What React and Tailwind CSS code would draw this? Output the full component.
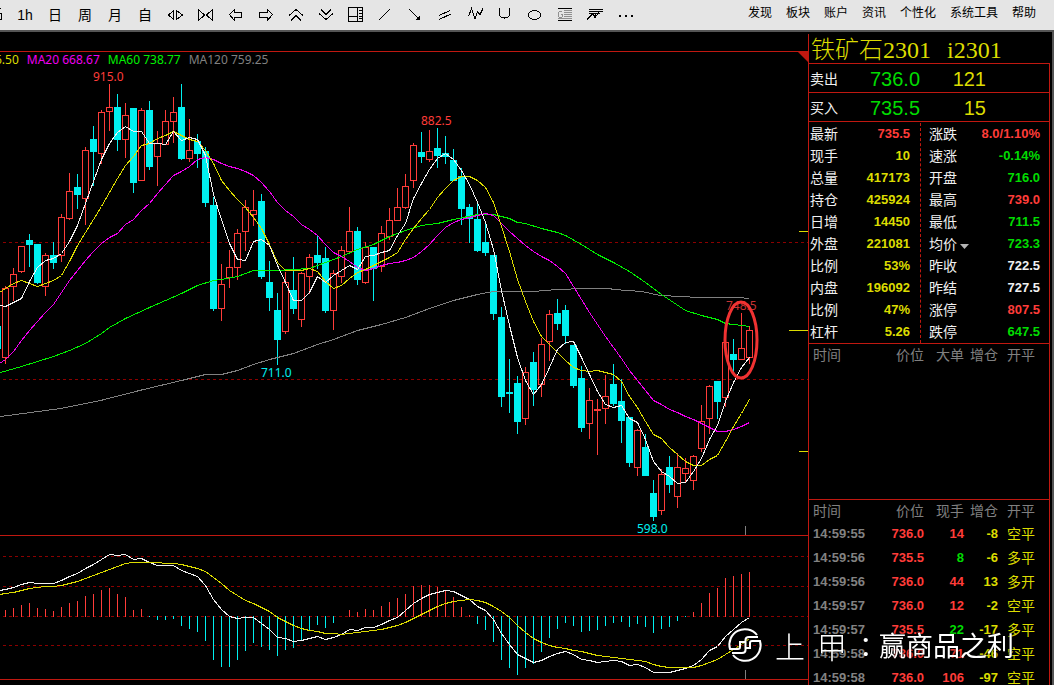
import React from "react";

// [up = 1 / down = 0, high, body top, body bottom, low], one candle every 8px
const candles = [
  [1, 286, 288, 358, 364], [1, 268, 274, 287, 301], [1, 246, 246, 272, 273],
  [0, 234, 240, 245, 267], [0, 244, 244, 283, 284], [1, 253, 255, 287, 296],
  [0, 242, 255, 263, 269], [1, 214, 217, 256, 262], [1, 173, 191, 219, 220],
  [0, 174, 187, 195, 209], [1, 147, 150, 199, 225], [0, 126, 139, 152, 186],
  [1, 110, 112, 154, 164], [1, 84, 107, 112, 131], [0, 94, 107, 140, 151],
  [1, 103, 115, 140, 158], [0, 108, 108, 183, 193], [1, 108, 110, 181, 181],
  [0, 101, 110, 167, 170], [1, 131, 143, 157, 186], [1, 110, 121, 145, 145],
  [1, 97, 112, 122, 143], [0, 84, 107, 159, 160], [1, 119, 150, 159, 162],
  [0, 134, 141, 154, 168], [0, 147, 151, 203, 207], [0, 197, 205, 309, 311],
  [1, 264, 284, 309, 321], [1, 250, 267, 278, 288], [1, 229, 233, 268, 280],
  [1, 200, 207, 232, 251], [1, 190, 210, 215, 226], [0, 194, 201, 277, 279],
  [0, 261, 282, 298, 311], [0, 293, 310, 340, 365], [1, 272, 282, 332, 334],
  [0, 257, 290, 309, 314], [1, 272, 273, 320, 327], [1, 254, 257, 277, 294],
  [0, 236, 255, 263, 269], [0, 247, 258, 311, 313], [1, 270, 273, 311, 330],
  [1, 246, 250, 277, 283], [1, 207, 231, 252, 253], [0, 227, 231, 280, 285],
  [1, 242, 247, 283, 284], [0, 247, 247, 269, 301], [1, 226, 233, 267, 272],
  [1, 208, 220, 237, 240], [1, 188, 207, 221, 221], [1, 174, 186, 208, 209],
  [1, 143, 145, 181, 188], [0, 132, 152, 157, 163], [1, 130, 151, 160, 162],
  [0, 128, 148, 156, 168], [0, 136, 153, 157, 164], [0, 149, 160, 181, 181],
  [0, 168, 176, 209, 225], [0, 204, 207, 219, 243], [0, 204, 219, 251, 252],
  [0, 223, 242, 253, 256], [0, 255, 255, 314, 320], [0, 307, 317, 397, 407],
  [0, 359, 392, 394, 413], [0, 376, 383, 422, 434], [1, 367, 372, 419, 425],
  [0, 352, 362, 390, 406], [1, 338, 344, 385, 397], [1, 310, 314, 342, 361],
  [0, 299, 313, 324, 330], [0, 305, 310, 336, 344], [0, 345, 345, 386, 388],
  [0, 366, 378, 428, 432], [1, 388, 400, 424, 439], [1, 399, 409, 411, 455],
  [1, 375, 396, 409, 424], [0, 364, 384, 404, 406], [0, 379, 401, 421, 443],
  [0, 417, 417, 463, 467], [1, 429, 430, 468, 476], [0, 434, 447, 476, 476],
  [0, 480, 493, 517, 521], [1, 469, 474, 511, 515], [0, 456, 467, 485, 493],
  [1, 453, 467, 497, 508], [1, 458, 468, 474, 483], [1, 455, 456, 481, 490],
  [1, 405, 421, 449, 452], [1, 385, 386, 419, 434], [0, 381, 381, 402, 419],
  [1, 340, 342, 398, 407], [0, 339, 354, 360, 372], [1, 313, 348, 360, 360],
  [1, 326, 330, 358, 364],
];

const ma5 = [
  306, 302, 298, 281, 267, 260, 258, 253, 241, 225, 203, 181, 159, 143, 132,
  126, 131, 131, 143, 143, 144, 131, 140, 137, 139, 155, 194, 219, 243, 259,
  260, 241, 239, 245, 265, 282, 300, 300, 292, 276, 282, 275, 270, 265, 269,
  256, 255, 252, 250, 235, 223, 198, 183, 169, 158, 153, 159, 170, 184, 202,
  222, 249, 290, 325, 357, 380, 394, 384, 367, 349, 342, 341, 357, 374, 391,
  404, 407, 405, 418, 422, 439, 461, 471, 476, 483, 482, 471, 458, 439, 425,
  401, 382, 367, 357,
];
const ma10 = [
  288, 283, 280, 283, 286, 283, 280, 275, 261, 245, 232, 219, 206, 192, 178,
  165, 156, 145, 143, 138, 135, 131, 135, 139, 141, 150, 163, 180, 190, 199,
  207, 217, 228, 244, 262, 270, 270, 270, 268, 271, 281, 288, 285, 278, 272,
  269, 265, 261, 257, 252, 239, 228, 218, 209, 197, 188, 180, 176, 176, 180,
  187, 202, 226, 251, 279, 301, 321, 336, 344, 352, 360, 367, 370, 371, 370,
  372, 374, 381, 396, 407, 421, 434, 438, 447, 454, 461, 465, 465, 459, 455,
  441, 426, 413, 399,
];
const ma20 = [
  359, 351, 340, 330, 321, 312, 304, 292, 280, 270, 260, 251, 243, 237, 233,
  224, 219, 210, 203, 193, 184, 175, 171, 166, 159, 157, 159, 163, 166, 168,
  171, 175, 182, 191, 202, 210, 216, 224, 229, 235, 244, 252, 256, 261, 267,
  270, 268, 265, 263, 262, 260, 257, 251, 244, 235, 227, 222, 219, 217, 215,
  213, 215, 223, 231, 238, 245, 251, 256, 260, 266, 273, 286, 299, 312, 324,
  336, 347, 358, 370, 380, 390, 400, 404, 409, 412, 416, 419, 423, 427, 431,
  431, 429, 426, 422,
];
const ma60 = [
  [0, 372], [21, 366], [37, 361], [53, 356], [69, 350], [85, 343], [101, 333],
  [109, 327], [125, 318], [149, 307], [165, 300], [181, 293], [197, 285],
  [213, 280], [221, 279], [237, 276], [253, 270], [277, 270], [309, 268],
  [325, 262], [341, 256], [357, 249], [373, 244], [389, 236], [405, 230],
  [421, 225], [437, 223], [453, 219], [477, 214], [493, 214], [509, 218],
  [517, 222], [525, 223], [541, 228], [557, 232], [565, 235], [581, 244],
  [597, 254], [613, 262], [629, 271], [645, 282], [661, 294], [685, 310],
  [701, 315], [717, 319], [725, 323], [741, 325], [749, 326],
];
const ma120 = [
  [0, 416], [30, 412], [60, 408], [100, 400], [143, 389], [160, 385],
  [181, 380], [205, 374], [221, 374], [237, 370], [253, 364], [269, 359],
  [293, 353], [317, 344], [333, 339], [357, 330], [381, 324], [405, 317],
  [429, 308], [453, 300], [477, 294], [493, 291], [533, 291], [557, 289],
  [585, 288], [609, 288], [613, 289], [641, 291], [660, 295], [681, 296],
  [698, 297], [737, 297], [749, 298],
];

// macd bars, end of each bar; the zero line is at 616
const bars = [
  610, 608, 605, 603, 608, 609, 611, 607, 603, 601, 596, 594, 590, 588, 594,
  597, 610, 609, 617, 620, 620, 619, 626, 629, 632, 641, 660, 667, 667, 660,
  651, 643, 647, 650, 656, 650, 648, 640, 630, 625, 628, 623, 616, 610, 612,
  609, 610, 606, 602, 598, 594, 586, 585, 585, 587, 590, 597, 607, 615, 624,
  630, 642, 660, 668, 675, 668, 664, 652, 638, 629, 623, 626, 632, 631, 630,
  626, 623, 622, 627, 624, 627, 633, 629, 627, 621, 617, 612, 603, 593, 588,
  578, 576, 574, 572,
];
const dif = [
  589, 587, 584, 582, 583, 583, 583, 580, 576, 573, 568, 564, 559, 554, 555,
  554, 559, 558, 562, 565, 565, 565, 570, 573, 576, 585, 599, 609, 616, 618,
  617, 617, 623, 629, 637, 638, 641, 640, 638, 636, 639, 637, 634, 629, 630,
  627, 627, 624, 620, 617, 610, 603, 598, 594, 592, 590, 591, 595, 599, 606,
  610, 619, 633, 644, 654, 658, 662, 660, 656, 653, 651, 654, 659, 660, 662,
  661, 660, 661, 665, 664, 667, 672, 672, 672, 670, 668, 665, 659, 650, 646,
  636, 629, 622, 617,
];
const dea = [
  593, 592, 590, 588, 587, 586, 586, 585, 583, 581, 578, 575, 572, 569, 566,
  563, 562, 562, 562, 562, 563, 563, 564, 566, 568, 571, 577, 583, 590, 595,
  600, 603, 607, 611, 617, 621, 625, 628, 630, 631, 633, 633, 634, 633, 632,
  631, 630, 629, 627, 625, 622, 618, 614, 610, 606, 603, 601, 600, 599, 600,
  602, 606, 611, 617, 625, 632, 638, 642, 645, 647, 648, 650, 651, 653, 655,
  656, 657, 658, 659, 660, 661, 664, 666, 667, 667, 667, 667, 665, 662, 659,
  654, 649, 644, 638,
];

const toPoints = (list) => list.map(([x, y]) => `${x + 0.5},${y + 0.5}`).join(" ");
const series = (start, list) =>
  toPoints([[-1, start], ...list.map((y, i) => [5 + 8 * i, y])]);

const Line = ({ points, color }) => (
  <polyline points={points} fill="none" stroke={color} />
);

const Dashes = ({ y }) => (
  <line x1="3" x2="808" y1={y + 0.5} y2={y + 0.5} stroke="#8c0000" strokeDasharray="3 3" />
);

const ChartLabel = ({ x, y, color, children }) => (
  <text x={x} y={y} fill={color} fontSize="12" fontFamily="'Noto Sans', sans-serif">
    {children}
  </text>
);

const PriceChart = () => {
  return (
    <svg className="block w-full h-[467px] overflow-visible" viewBox="0 68 808 467">
      <g shapeRendering="crispEdges">
        <Dashes y={242} />
        <Dashes y={379} />
        <rect x="0" y="326" width="1" height="23" fill="#00f0f0" />
        {candles.map(([up, high, top, bottom, low], i) => {
          const x = 2 + 8 * i;
          if (up) {
            return (
              <g key={i} stroke="#ff3c39" fill="none">
                <path d={`M${x + 3.5} ${high}V${top}M${x + 3.5} ${bottom}V${low}`} />
                <rect x={x + 0.5} y={top + 0.5} width="6" height={bottom - top - 1} />
              </g>
            );
          }
          return (
            <g key={i} fill="#00f0f0">
              <rect x={x + 3} y={high} width="1" height={low - high} />
              <rect x={x} y={top} width="7" height={bottom - top} />
            </g>
          );
        })}
        <Line points={toPoints(ma120)} color="#808080" />
        <Line points={toPoints(ma60)} color="#00f000" />
        <Line points={series(363, ma20)} color="#f000f0" />
        <Line points={series(292, ma10)} color="#dcdc00" />
        <Line points={series(305, ma5)} color="#f0f0f0" />
        <path d="M799 231.5h9M789 330.5h19M799 451.5h9" stroke="#dcdc00" />
        <path d="M745.5 526v9" stroke="#808080" />
      </g>
      <ChartLabel x={93} y={81} color="#ff3c39">915.0</ChartLabel>
      <ChartLabel x={421} y={125} color="#ff3c39">882.5</ChartLabel>
      <ChartLabel x={261} y={377} color="#00f0f0">711.0</ChartLabel>
      <ChartLabel x={637} y={533} color="#00f0f0">598.0</ChartLabel>
      <ChartLabel x={726} y={310} color="#c83232">748.5</ChartLabel>
      <ellipse cx="741" cy="340" rx="16" ry="38" fill="none" stroke="#f03232" strokeWidth="3" />
    </svg>
  );
};

const MacdChart = () => {
  return (
    <svg className="block w-full h-[143px]" viewBox="0 536 808 143" shapeRendering="crispEdges">
      <Dashes y={556} />
      <Dashes y={586} />
      <Dashes y={616} />
      <Dashes y={645} />
      {bars.map((y, i) => (
        <rect
          key={i}
          x={5 + 8 * i}
          y={y < 616 ? y : 616}
          width="1"
          height={y < 616 ? 617 - y : y - 616}
          fill={y < 616 ? "#ff3c39" : "#00f0f0"}
        />
      ))}
      <Line points={series(590, dif)} color="#f0f0f0" />
      <Line points={series(594, dea)} color="#dcdc00" />
      <path d="M745.5 670v9" stroke="#808080" />
    </svg>
  );
};

const icons = [
  { name: "扩展", draw: <path d="M13.5 10.5v9L8.5 15zM16.5 10.5v9l6-4.5z" /> },
  { name: "收缩", draw: <path d="M8.5 9.5v11L14.5 15zM22.5 9.5v11L16.5 15z" /> },
  { name: "左移", draw: <path d="M9.5 14.5l5-5v3h7v5h-7v3z" /> },
  { name: "右移", draw: <path d="M22.5 14.5l-5-5v3h-8v5h8v3z" /> },
  { name: "放大", draw: <path d="M9 15.5l7-6 7 6M11 20.5l5-5 5 5" /> },
  { name: "缩小", draw: <path d="M9 13.5l7 6 7-6M11 9.5l5 5 5-5" /> },
  { name: "版面", draw: <path d="M8.5 7.5h14v14h-14zM17.5 7.5v14M8.5 16.5h9M19 10.5h3M19 13.5h3M19 16.5h3M19 18.5h3" /> },
  { name: "直线", draw: <path d="M9 20L20 9" /> },
  { name: "箭头", draw: <><path d="M9 9l10 10" /><path d="M20 15v5h-5z" fill="#000" stroke="none" /></> },
  { name: "平行线", draw: <path d="M9 15.5l11-5M9 19.5l12-5.5" /> },
  { name: "波浪线", draw: <path d="M8.5 16.5l3-8 3.5 10.5 2.5-7 2.5 2.5 3-6" /> },
  { name: "弧线", draw: <path d="M9.5 8v6q0 4 5 4t5-4V8" /> },
  { name: "椭圆", draw: <ellipse cx="14.5" cy="15" rx="6" ry="4.5" /> },
  {
    name: "黄金分割",
    draw: (
      <>
        <path d="M8 8.5h14M8 20.5h14" />
        <path d="M14 10.5h8M14 12.5h8M14 14.5h8M14 16.5h8M8 18.5h14M12.5 12.5l-1-1h-2l-1 1v4l1 1h2l1-1v-2h-2" stroke="#909090" />
      </>
    ),
  },
  { name: "压力线", draw: <path d="M9 9.5h14M9 11.5h14M9 13.5h11M7 19.5l6-6 2 4 4-5M14 17.5l2-4" /> },
  { name: "更多", draw: <path d="M9 15.5h2M15 15.5h2M21 15.5h2" strokeWidth="2" /> },
];

const periods = ["1h", "日", "周", "月", "自"];
const menus = ["发现", "板块", "账户", "资讯", "个性化", "系统工具", "帮助"];

const Toolbar = () => {
  return (
    <header className="flex shrink-0 h-8 border-b-2 border-[#555555] bg-[#e5e5e5] text-black">
      <button aria-label="分钟" className="w-[10px]">
        <svg width="10" height="30" fill="none" stroke="#000" shapeRendering="crispEdges">
          <path d="M0 8.5h1M0 13.5h1v6H0" />
        </svg>
      </button>
      {periods.map((period) => (
        <button key={period} className="w-[30px] h-[30px] text-sm">
          {period}
        </button>
      ))}
      {icons.map((icon) => (
        <button key={icon.name} aria-label={icon.name} className="w-[30px] h-[30px]">
          <svg width="30" height="30" fill="none" stroke="#000" shapeRendering="crispEdges">
            {icon.draw}
          </svg>
        </button>
      ))}
      <nav className="ml-auto mr-[18px] flex gap-[14px] h-[26px] items-center text-xs">
        {menus.map((menu) => (
          <a key={menu} href="#">
            {menu}
          </a>
        ))}
      </nav>
    </header>
  );
};

const red = "text-[#ff3c39]";
const green = "text-[#00dc00]";
const yellow = "text-[#dcdc00]";
const white = "text-[#f0f0f0]";

const leftQuotes = [
  ["最新", "735.5", red],
  ["现手", "10", yellow],
  ["总量", "417173", yellow],
  ["持仓", "425924", yellow],
  ["日增", "14450", yellow],
  ["外盘", "221081", yellow],
  ["比例", "53%", yellow],
  ["内盘", "196092", yellow],
  ["比例", "47%", yellow],
  ["杠杆", "5.26", yellow],
];
const rightQuotes = [
  ["涨跌", "8.0/1.10%", red],
  ["速涨", "-0.14%", green],
  ["开盘", "716.0", green],
  ["最高", "739.0", red],
  ["最低", "711.5", green],
  ["均价", "723.3", green],
  ["昨收", "722.5", white],
  ["昨结", "727.5", white],
  ["涨停", "807.5", red],
  ["跌停", "647.5", green],
];

const QuoteList = ({ quotes }) => {
  return (
    <dl>
      {quotes.map(([label, value, color], i) => (
        <div key={i} className="flex h-[22px] items-center">
          <dt className="flex items-center gap-[3px]">
            {label}
            {label === "均价" && (
              <svg width="9" height="5" className="mt-1" fill="#b4b4b4">
                <path d="M0 0h9L4.500 5z" />
              </svg>
            )}
          </dt>
          <dd className={`ml-auto text-[13px] font-bold ${color}`}>{value}</dd>
        </div>
      ))}
    </dl>
  );
};

const trades = [
  ["14:59:55", "736.0", "14", red, "-8", "空平"],
  ["14:59:56", "735.5", "8", green, "-6", "多平"],
  ["14:59:56", "736.0", "44", red, "13", "多开"],
  ["14:59:57", "736.0", "12", red, "-2", "空平"],
  ["14:59:57", "735.5", "22", green, "-17", "多平"],
  ["14:59:58", "736.0", "71", red, "-46", "空平"],
  ["14:59:58", "736.0", "106", red, "-97", "空平"],
];

const TradeTable = ({ volume, rows }) => {
  return (
    <table className="w-full table-fixed text-right text-[13px] font-bold">
      <colgroup>
        <col className="w-[66px]" />
        <col className="w-[49px]" />
        <col className="w-[40px]" />
        <col className="w-[34px]" />
        <col />
      </colgroup>
      <thead className="text-sm text-[#808080]">
        <tr className="h-[22px]">
          <th className="p-0 pl-1 text-left font-normal">时间</th>
          <th className="p-0 font-normal">价位</th>
          <th className="p-0 font-normal">{volume}</th>
          <th className="p-0 font-normal">增仓</th>
          <th className="p-0 pl-[9px] text-left font-normal">开平</th>
        </tr>
      </thead>
      <tbody>
        {rows.map(([time, price, amount, color, change, kind], i) => (
          <tr key={i} className="h-6">
            <td className="p-0 pl-1 text-left text-[#828282] whitespace-nowrap">{time}</td>
            <td className={`p-0 ${red}`}>{price}</td>
            <td className={`p-0 ${color}`}>{amount}</td>
            <td className="p-0 text-[#dcdc00]">{change}</td>
            <td className="p-0 pl-[9px] text-left text-sm font-normal text-[#dcdc00]">{kind}</td>
          </tr>
        ))}
      </tbody>
    </table>
  );
};

const BidRow = ({ label, price, amount }) => (
  <div className="flex h-[29px] items-center border-b border-[#c01810] pl-px pt-0.5 text-sm">
    <span>{label}</span>
    <span className="ml-8 text-xl text-[#00dc00]">{price}</span>
    <span className="ml-auto mr-[63px] text-xl text-[#dcdc00]">{amount}</span>
  </div>
);

const QuotePanel = () => {
  return (
    <aside className="flex w-[246px] shrink-0 flex-col border-r-2 border-[#555555] pt-0.5 text-[#f0f0f0]">
      <div className="flex grow flex-col border-l border-[#c01810]">
        <h1 className="flex h-[29px] items-center gap-4 pl-0.5 pt-0.5 text-2xl font-light text-[#dcdc00] font-['Liberation_Serif','Noto_Sans_CJK_SC',serif]">
          <span>铁矿石2301</span>
          <span>i2301</span>
        </h1>
        <div className="mr-0.5 grow border-t border-r border-[#c01810]">
          <BidRow label="卖出" price="736.0" amount="121" />
          <BidRow label="买入" price="735.5" amount="15" />
          <div className="grid grid-cols-[112px_1fr] border-b border-[#c01810] pt-px text-sm">
            <div className="border-r border-dashed border-[#c01810] pl-px pr-[10px]">
              <QuoteList quotes={leftQuotes} />
            </div>
            <div className="pl-2 pr-[9px]">
              <QuoteList quotes={rightQuotes} />
            </div>
          </div>
          <div className="h-[156px] border-b border-[#c01810]">
            <TradeTable volume="大单" rows={[]} />
          </div>
          <TradeTable volume="现手" rows={trades} />
        </div>
      </div>
    </aside>
  );
};

const Legend = () => (
  <div className="flex h-4 gap-2 text-xs font-['Noto_Sans',sans-serif]">
    <span className="-ml-[5px] text-[#dcdc00]">6.50</span>
    <span className="text-[#f000f0]">MA20 668.67</span>
    <span className="text-[#00f000]">MA60 738.77</span>
    <span className="text-[#808080]">MA120 759.25</span>
    <svg width="10" height="10" className="ml-auto" fill="#c01810">
      <path d="M0 0h10v10z" />
    </svg>
  </div>
);

const Watermark = () => (
  <div className="absolute right-10 bottom-[14px] flex h-12 items-center text-[27px] text-white drop-shadow-[0_0_1px_#000]">
    <svg width="36" height="36" viewBox="0 0 36 36" className="mb-1" fill="none" stroke="#fff" strokeWidth="2">
      <path d="M30 8A15.500 15.500 0 0 0 3 22h8q2 0 2-2v-5h5" />
      <path d="M6 28A15.500 15.500 0 0 0 33 14h-8q-2 0-2 2v5h-5" />
      <path d="M31 10h-9q-3.500 0-3.500 3v10q0 3-3.500 3H5" />
    </svg>
    <span className="ml-3 text-[30px] font-light">上</span>
    <span className="ml-3 text-[30px] font-light">甲</span>
    <span className="ml-3 w-5">：</span>
    <span>赢商品之利</span>
  </div>
);

const App = () => {
  return (
    <div className="relative flex h-screen flex-col overflow-hidden bg-black font-['Liberation_Sans','Noto_Sans_CJK_SC',sans-serif]">
      <Toolbar />
      <main className="flex min-h-0 grow">
        <section className="min-w-0 grow">
          <div className="h-5 border-b border-[#c01810]"></div>
          <Legend />
          <PriceChart />
          <div className="border-y border-[#c01810]">
            <MacdChart />
          </div>
        </section>
        <QuotePanel />
      </main>
      <Watermark />
    </div>
  );
};

export default App;
